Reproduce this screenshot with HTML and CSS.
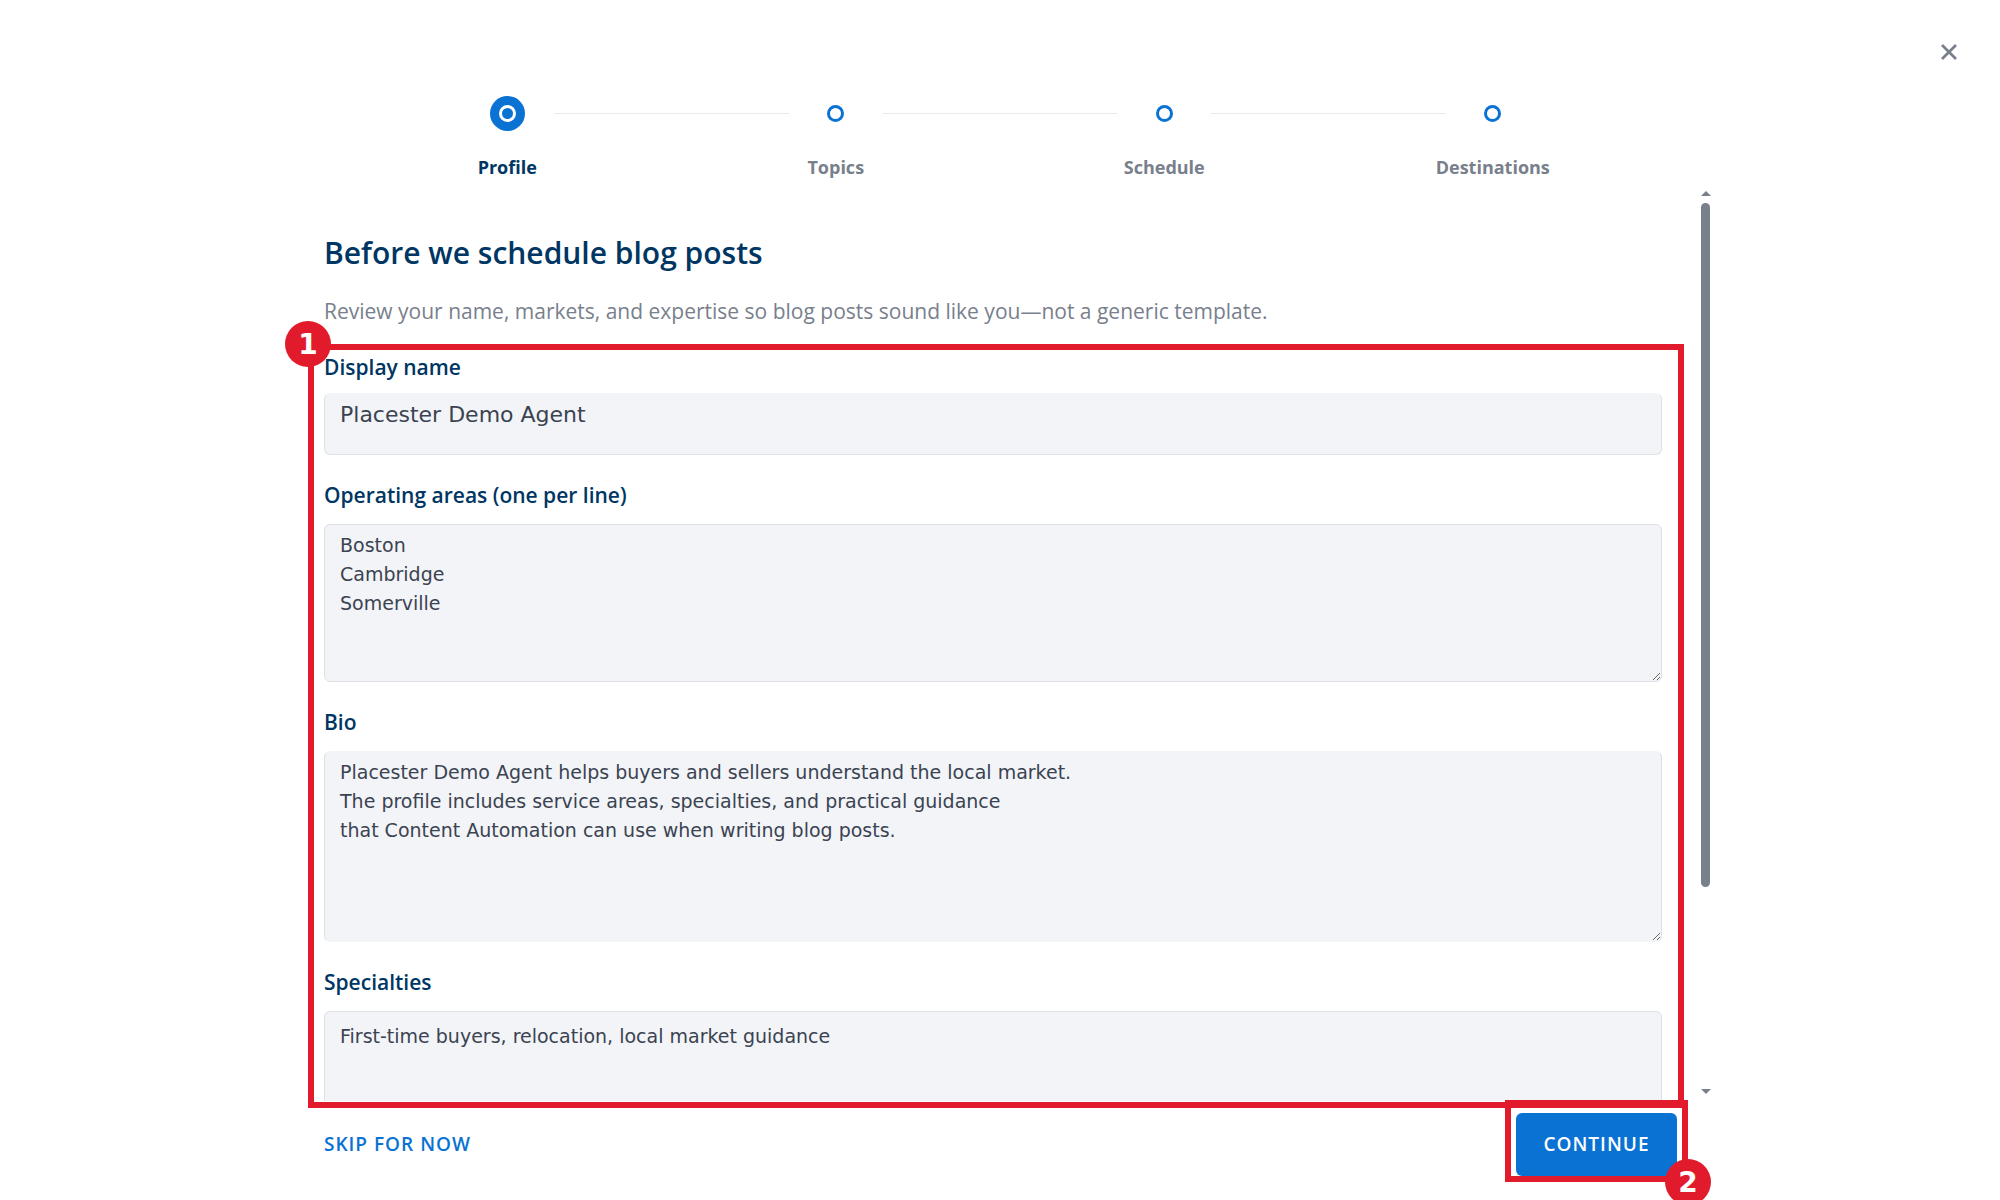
FILE: index.html
```html
<!DOCTYPE html>
<html lang="en">

<head>
    <meta charset="UTF-8">
    <meta name="viewport" content="width=device-width, initial-scale=1.0">
    <title>Content Automation setup</title>
    <link rel="stylesheet" href="styles.css">
</head>

<body>
    <button type="button" class="close" aria-label="Close">
        <svg width="18" height="18" viewBox="0 0 18 18">
            <path d="M2 2 L16 16 M16 2 L2 16" fill="none" stroke="#78808c" stroke-width="2.8"/>
        </svg>
    </button>

    <div class="wizard">
        <ol class="steps">
            <li class="step active">
                <span class="dot"></span>
                <span class="step_name">Profile</span>
            </li>
            <li class="step">
                <span class="dot"></span>
                <span class="step_name">Topics</span>
            </li>
            <li class="step">
                <span class="dot"></span>
                <span class="step_name">Schedule</span>
            </li>
            <li class="step">
                <span class="dot"></span>
                <span class="step_name">Destinations</span>
            </li>
        </ol>

        <div class="panel">
            <form class="content" id="profile">
                <h1>Before we schedule blog posts</h1>
                <p class="lead">Review your name, markets, and expertise so blog posts sound like you—not a generic template.</p>

                <div class="field first">
                    <label for="name">Display name</label>
                    <input type="text" id="name" class="no_top" value="Placester Demo Agent">
                </div>
                <div class="field">
                    <label for="areas">Operating areas (one per line)</label>
                    <textarea id="areas" class="areas">Boston
Cambridge
Somerville</textarea>
                </div>
                <div class="field">
                    <label for="bio">Bio</label>
                    <textarea id="bio" class="bio no_top">Placester Demo Agent helps buyers and sellers understand the local market.
The profile includes service areas, specialties, and practical guidance
that Content Automation can use when writing blog posts.</textarea>
                </div>
                <div class="field">
                    <label for="specialties">Specialties</label>
                    <textarea id="specialties" class="specialties">First-time buyers, relocation, local market guidance</textarea>
                </div>
            </form>

            <div class="scrollbar">
                <span class="arrow up"></span>
                <div class="track">
                    <div class="thumb"></div>
                </div>
                <span class="arrow down"></span>
            </div>

            <div class="mark mark_form"><span class="num">1</span></div>
        </div>

        <div class="footer">
            <button type="button" class="skip">SKIP FOR NOW</button>
            <div class="next">
                <button type="submit" form="profile" class="continue">CONTINUE</button>
                <div class="mark mark_next"><span class="num">2</span></div>
            </div>
        </div>
    </div>
</body>

</html>
```
FILE: styles.css
```css
*,
*::before,
*::after {
    margin: 0;
    padding: 0;
    box-sizing: border-box;
}

body {
    height: 100vh;
    overflow: hidden;
    background: #fff;
    font-family: "Open Sans", sans-serif;
    color: #78808c;
}

button {
    border: none;
    background: none;
    font-family: inherit;
    cursor: pointer;
}

.close {
    position: absolute;
    top: 43px;
    right: 42px;
    width: 18px;
    height: 18px;
}

.close svg {
    display: block;
}

.wizard {
    display: flex;
    flex-direction: column;
    max-width: 1420px;
    height: 100%;
    margin: 0 auto;
    padding-top: 96px;
}

/* steps */
.steps {
    display: flex;
    margin: 0 53px;
    list-style: none;
}

.step {
    flex: 1;
    position: relative;
    display: flex;
    flex-direction: column;
    align-items: center;
    gap: 23px;
}

.step + .step::before {
    content: "";
    position: absolute;
    top: 17px;
    left: calc(-50% + 47px);
    right: calc(50% + 47px);
    height: 1px;
    background: #e8eaec;
}

.dot {
    display: flex;
    align-items: center;
    justify-content: center;
    width: 35px;
    height: 35px;
    border-radius: 50%;
}

.dot::after {
    content: "";
    width: 17px;
    height: 17px;
    border: 3px solid #0972d3;
    border-radius: 50%;
}

.active .dot {
    background: #0972d3;
}

.active .dot::after {
    border-color: #fff;
}

.step_name {
    font-size: 18px;
    font-weight: 700;
    line-height: 26px;
}

.active .step_name {
    color: #003663;
}

/* scrolling form */
.panel {
    flex: 1;
    min-height: 0;
    position: relative;
    display: flex;
    justify-content: space-between;
    margin-top: 9px;
}

.content {
    flex: 1;
    padding: 43px 39px 0 34px;
    overflow: hidden;
}

h1 {
    font-size: 30px;
    font-weight: 600;
    line-height: 42px;
    color: #003663;
}

.lead {
    margin-top: 22px;
    font-size: 21px;
    line-height: 30px;
}

.field {
    display: flex;
    flex-direction: column;
    gap: 14px;
    margin-top: 25px;
}

.field.first {
    gap: 11px;
    margin-top: 26px;
}

.field label {
    font-size: 21px;
    font-weight: 600;
    line-height: 30px;
    color: #003663;
}

.field input,
.field textarea {
    width: 100%;
    padding: 6px 15px;
    border: 1px solid #dde1e6;
    border-radius: 6px;
    background: #f2f4f8;
    font-family: "DejaVu Sans", sans-serif;
    font-size: 19px;
    line-height: 29px;
    color: #3b4351;
}

.field input {
    height: 62px;
    padding-top: 5px;
    padding-bottom: 24px;
    font-size: 22px;
}

.field .no_top {
    border-top-color: #f2f4f8;
}

.field .areas {
    height: 158px;
}

.field .bio {
    height: 191px;
    border-bottom-color: #f2f4f8;
}

.field .specialties {
    height: 158px;
    padding-top: 10px;
}

.scrollbar {
    display: flex;
    flex-direction: column;
    align-items: center;
    gap: 7px;
    width: 9px;
    padding: 2px 0 7px;
}

.track {
    flex: 1;
    width: 9px;
}

.thumb {
    height: 77.8%;
    border-radius: 5px;
    background: #78808c;
}

.arrow {
    border: 5px solid transparent;
}

.up {
    border-top: none;
    border-bottom-color: #78808c;
}

.down {
    border-bottom: none;
    border-top-color: #78808c;
}

/* footer */
.footer {
    display: flex;
    justify-content: space-between;
    align-items: center;
    padding: 12px 33px 24px 34px;
}

.skip,
.continue {
    padding-bottom: 2px;
    font-size: 19px;
    font-weight: 600;
    line-height: 30px;
    letter-spacing: 1px;
}

.skip {
    color: #0972d3;
}

.next {
    position: relative;
}

.continue {
    width: 161px;
    height: 63px;
    border-radius: 6px;
    background: #0972d3;
    color: #fff;
}

/* numbered callouts */
.mark {
    position: absolute;
    border: 6px solid #e11b2b;
    pointer-events: none;
}

.mark_form {
    top: 155px;
    right: 26px;
    bottom: -7px;
    left: 18px;
}

.mark_next {
    top: -13px;
    right: -11px;
    bottom: -6px;
    left: -11px;
}

.num {
    position: absolute;
    width: 46px;
    height: 46px;
    border-radius: 50%;
    background: #e11b2b;
    color: #fff;
    font-family: "DejaVu Sans", sans-serif;
    font-size: 28px;
    font-weight: 700;
    line-height: 48px;
    text-align: center;
}

.mark_form .num {
    top: -29px;
    left: -29px;
}

.mark_next .num {
    right: -29px;
    bottom: -29px;
}
```
